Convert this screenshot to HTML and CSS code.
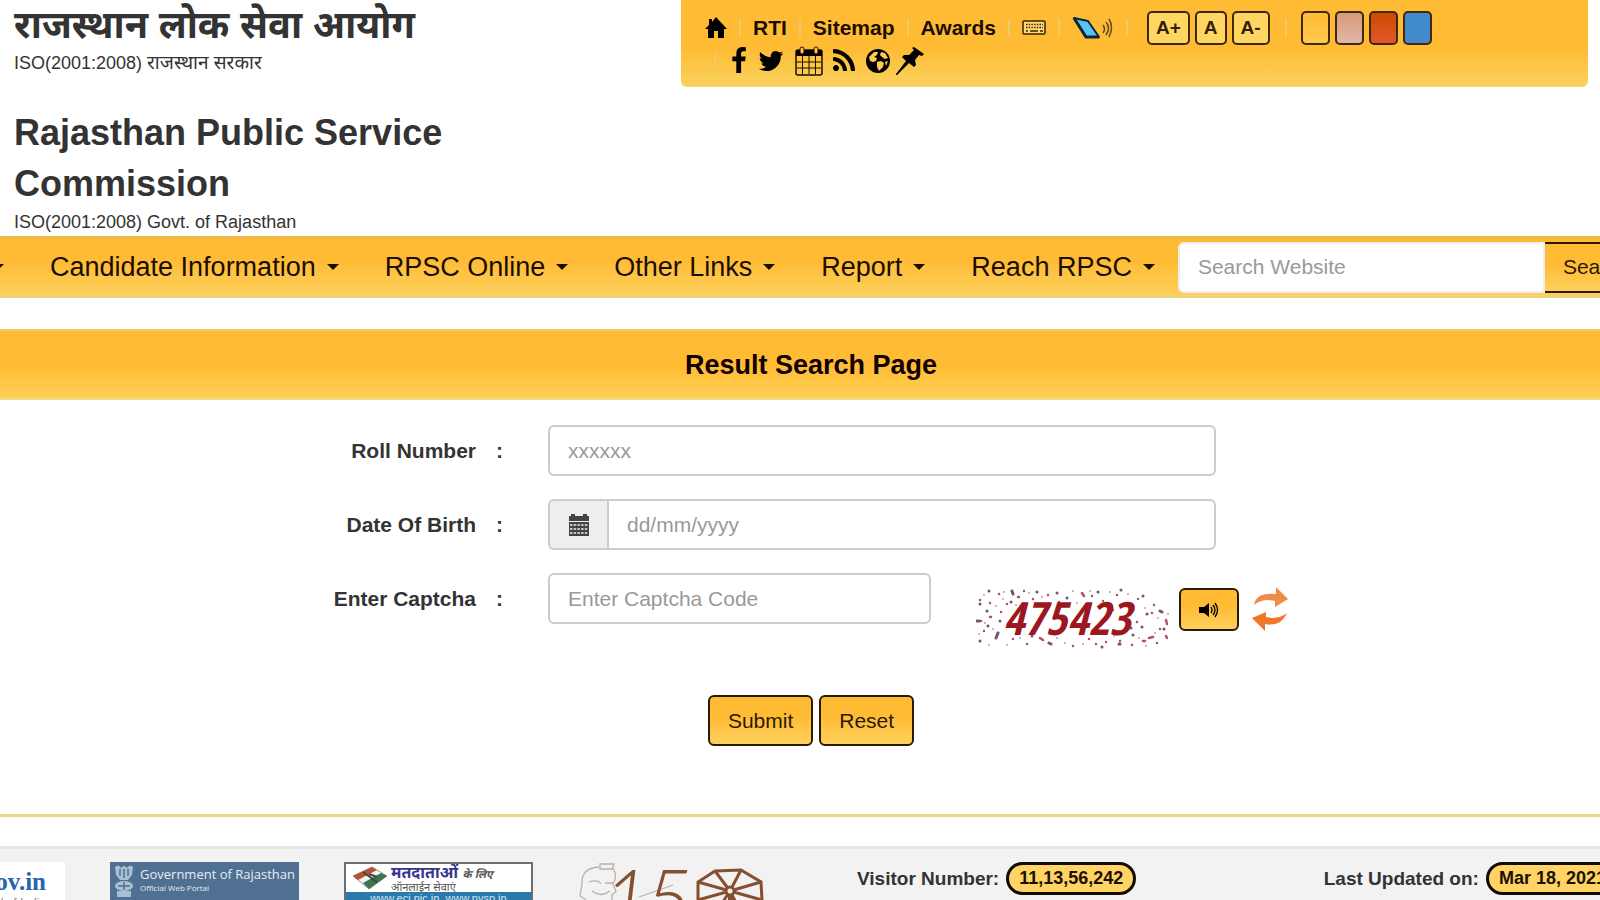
FILE: index.html
```html
<!DOCTYPE html>
<html lang="en">
<head>
<meta charset="utf-8">
<title>Result Search Page</title>
<link rel="stylesheet" href="styles.css">
</head>
<body>
<header class="header">
  <div class="brand">
    <p class="brand-title brand-hindi" lang="hi">राजस्थान लोक सेवा आयोग</p>
    <p class="brand-sub">ISO(2001:2008) <span class="sub-hindi" lang="hi">राजस्थान सरकार</span></p>
    <h1 class="brand-title brand-english">Rajasthan Public Service Commission</h1>
    <p class="brand-sub">ISO(2001:2008) Govt. of Rajasthan</p>
  </div>
  <div class="tools">
    <div class="tools-row">
      <a class="home" href="#" aria-label="Home"><svg width="22" height="22" viewBox="0 0 22 22"><path d="M11 0 22 12h-3v9h-6v-7H9v7H3v-9H0L4 8V2h3v3z"/></svg></a>
      <span class="sep"></span><a href="#">RTI</a>
      <span class="sep"></span><a href="#">Sitemap</a>
      <span class="sep"></span><a href="#">Awards</a>
      <span class="sep"></span>
      <a href="#" aria-label="Keyboard"><svg width="24" height="16" viewBox="0 0 24 16"><rect x="1" y="1" width="22" height="13" rx="1" fill="#ffd978" stroke="#3b2500" stroke-width="1.5"/><path d="M4 4.500h17M4 7.500h17" stroke="#3b2500" stroke-width="1.500" stroke-dasharray="1.500 1.200"/><path d="M4 11h2m2 0h8m2 0h3" stroke="#3b2500" stroke-width="1.500"/></svg></a>
      <span class="sep"></span>
      <a href="#" aria-label="Screen reader"><svg width="42" height="24" viewBox="0 0 42 24"><path d="M2 2 16 5l11 16H14z" fill="#58c4f2" stroke="#0b2836" stroke-width="2" stroke-linejoin="round"/><path d="M2 2 14 21h13" fill="none" stroke="#0b2836" stroke-width="3"/><path d="M31 9q3 4 0 8M34 6q5 6 0 13M37 3q5 8 0 18" fill="none" stroke="#5b4a23" stroke-width="1.500"/></svg></a>
      <span class="sep"></span>
      <div class="group sizes"><button class="size">A+</button><button class="size">A</button><button class="size">A-</button></div>
      <span class="sep"></span>
      <div class="group themes"><button class="theme" aria-label="Yellow theme"></button><button class="theme pink" aria-label="Pink theme"></button><button class="theme red" aria-label="Red theme"></button><button class="theme blue" aria-label="Blue theme"></button></div>
    </div>
    <div class="tools-row social">
      <span class="sep"></span>
      <a href="#" aria-label="Facebook"><svg width="20" height="28" viewBox="330 0 1280 1792"><path d="M1343 12v264h-157q-86 0-116 36t-30 108v189h293l-39 296h-254v759h-306v-759h-255v-296h255v-218q0-186 104-288.500t277-102.500q147 0 228 12z"/></svg></a>
      <a href="#" aria-label="Twitter"><svg width="28" height="28" viewBox="0 0 1792 1792"><path d="M1684 408q-67 98-162 167 1 14 1 42 0 130-38 259.500t-115.500 248.500-184.500 210.500-258 146-323 54.500q-271 0-496-145 35 4 78 4 225 0 401-138-105-2-188-64.500t-114-159.500q33 5 61 5 43 0 85-11-112-23-185.500-111.500t-73.500-205.500v-4q68 38 146 41-66-44-105-115t-39-154q0-88 44-163 121 149 294.500 238.500t371.500 99.500q-8-38-8-74 0-134 94.500-228.500t228.500-94.500q140 0 236 102 109-21 205-78-37 115-142 178 93-10 186-50z"/></svg></a>
      <a class="calendar" href="#" aria-label="Calendar"><svg width="28" height="30" viewBox="0 0 28 30"><rect x="1" y="4" width="26" height="25" rx="2" fill="none" stroke="#1c0d00" stroke-width="1.500"/><path d="M1 4h26v6H1z"/><path d="M7.500 10v18M14 10v18M20.500 10v18M2 16h24M2 22h24" stroke="#1c0d00"/><rect x="5" y="1" width="4" height="7" rx="2" fill="#ffc447" stroke="#1c0d00"/><rect x="19" y="1" width="4" height="7" rx="2" fill="#ffc447" stroke="#1c0d00"/></svg></a>
      <a href="#" aria-label="RSS feed"><svg width="28" height="28" viewBox="0 0 1792 1792"><path d="M576 1344q0 80-56 136t-136 56-136-56-56-136 56-136 136-56 136 56 56 136zm512 123q2 28-17 48-18 21-47 21h-135q-25 0-43-16.500t-20-41.500q-22-229-184.500-391.500t-391.500-184.500q-25-2-41.500-20t-16.500-43v-135q0-29 21-47 17-17 43-17h5q160 13 306 80.500t259 181.500q114 113 181.500 259t80.500 306zm512 2q2 27-18 47-18 20-46 20h-143q-26 0-44.500-17.500t-19.500-42.500q-12-215-101-408.500t-231.500-336-336-231.500-408.500-102q-25-1-42.500-19.500t-17.500-43.500v-143q0-28 20-46 18-18 44-18h3q262 13 501.500 120t425.500 294q187 186 294 425.500t120 501.500z"/></svg></a>
      <a href="#" aria-label="Language"><svg width="26" height="26" viewBox="0 0 26 26"><circle cx="13" cy="13" r="12"/><path d="M4 9l5-5 4 0-1 3-3 2 3 1-1 3-3 1-3-1zM16 4l4 1 3 5-3 1-3-2-2-2zM12 14l4-1 3 2-1 4-4 4-2-4zM20 14l3-1-2 5z" fill="#ffc957"/></svg></a>
      <a class="pin" href="#" aria-label="Pin"><svg width="30" height="30" viewBox="0 0 30 30"><path d="M19 1 29 8l-2 2-3-1-4 5 1 5-2 2-5-4L2 29l-1 0 0-1L11 15 7 11l2-2 5 0 5-5-2-2z"/></svg></a>
    </div>
  </div>
</header>

<nav class="nav">
  <a class="nav-first" href="#" aria-label="More"><span class="caret"></span></a>
  <a href="#">Candidate Information<span class="caret"></span></a>
  <a href="#">RPSC Online<span class="caret"></span></a>
  <a href="#">Other Links<span class="caret"></span></a>
  <a href="#">Report<span class="caret"></span></a>
  <a href="#">Reach RPSC<span class="caret"></span></a>
  <form class="search"><input class="field search-field" type="text" placeholder="Search Website" aria-label="Search Website"><button class="btn search-btn" type="button">Search</button></form>
</nav>

<main class="main">
  <h2 class="page-title">Result Search Page</h2>
  <form class="form">
    <div class="row">
      <label class="label" for="roll">Roll Number</label><span class="colon">:</span>
      <input class="field" id="roll" type="text" placeholder="xxxxxx">
    </div>
    <div class="row">
      <label class="label" for="dob">Date Of Birth</label><span class="colon">:</span>
      <div class="date"><span class="addon"><svg width="20" height="22" viewBox="0 0 20 22"><path d="M0 2h2V0h4v2h8V0h4v2h2v5H0zM0 8h20v14H0z" fill="#444"/><path d="M1 11h18M1 15h18M1 19h18" stroke="#eee" stroke-width="1.500" stroke-dasharray="2.500 1.200"/></svg></span><input class="field date-field" id="dob" type="text" placeholder="dd/mm/yyyy"></div>
    </div>
    <div class="row captcha-row">
      <label class="label" for="captcha">Enter Captcha</label><span class="colon">:</span>
      <input class="field" id="captcha" type="text" placeholder="Enter Captcha Code">
      <div class="captcha">
        <svg width="196" height="62" viewBox="0 0 196 62">
          <g fill="none" stroke-linecap="round">
            <path stroke="#b0506a" stroke-width="2.500" d="M4 13h0M14 30h1M23 7h0M31 17h0M42 10h1M48 4h0M57 12h0M72 8h0M83 15h0M106 6l2 3M116 9h0M127 14h0M141 8h0M150 16h0M162 12h0M178 18h0M190 33l1 4M184 42h0M173 51l4-1M167 54h2M190 49l1 2M156 58h0M130 55h0M113 52h0M97 59h0M64 51l3 2M51 57h0M37 52h0M22 46h0M8 44h0M5 34h0M161 35h0M176 26h0M181 56h0M144 54h0M137 23h0M149 30h0M25 25h0M14 16h0M120 57h0"/>
            <path stroke="#71566d" stroke-width="3" d="M13 4h0M36 4l1 3M61 5h0M81 6h0M122 5h0M145 3h0M167 9h0M184 24l2 1M171 27h0M166 40h0M155 41h0M157 48h0M143 57h1M126 60h0M73 56l2 1M56 49h0M20 51l2-5M4 54h0M1 34h2M12 39h0M24 34h0M11 24h0M4 17h0M35 15h0M69 18h0M91 11h0M132 29h0M47 24h0M188 42h0"/>
            <path stroke="#d197a5" stroke-width="2" d="M8 8h0M28 5h0M53 6h0M66 10h0M97 4h0M101 16h0M114 4h0M134 5h0M152 7h0M158 23h0M169 21h0M182 31h0M192 27h0M179 46h0M163 51h0M170 59h0M138 49h0M107 57h0M89 56h0M81 51h0M44 51h0M31 58h0M13 58h0M17 42h0M3 47h0M9 36h0M20 19h0M27 12h0M40 18h0"/>
          </g>
          <text class="captcha-code" x="27" y="48">475423</text>
        </svg>
        <button class="btn audio" type="button" aria-label="Play captcha"><svg width="22" height="16" viewBox="0 0 22 16"><path d="M1 5h5l5-4v14l-5-4H1z"/><path d="M13 5q2 3 0 6M15 3q4 5 0 10M17 1q5 7 0 14" fill="none" stroke="#000" stroke-width="1.300"/></svg></button>
        <a class="refresh" href="#" aria-label="Refresh captcha"><svg width="36" height="44" viewBox="0 0 36 44"><path d="M2 18Q4 5 24 7V0l12 12-13 8v-6Q11 11 2 18z" fill="#f28b43"/><path d="M35 26Q29 40 13 37v7L0 31l14-6v5q12 3 21-4z" fill="#f27628"/></svg></a>
      </div>
    </div>
    <div class="actions"><button class="btn" type="button">Submit</button><button class="btn" type="button">Reset</button></div>
  </form>
</main>

<footer class="footer">
  <a class="logo logo-india" href="#"><strong>gov.in</strong><small>portal of India</small></a>
  <a class="logo logo-raj" href="#">
    <svg width="24" height="40" viewBox="0 0 24 40"><g fill="#a9bfd2"><path d="M3 3q4-3 6 1 3-4 6 0 3-4 6-1l-1 8-4 5H8l-4-5z"/><ellipse cx="12" cy="22" rx="9" ry="5"/><path d="M5 27h14v6H5z"/></g><path d="M8 5v7m4-7v9m4-9v7M6 22h12M12 18v8" stroke="#507091" stroke-width="1.500"/></svg>
    <span class="raj-text">Government of Rajasthan<small>Official Web Portal</small></span>
  </a>
  <a class="logo logo-vote" href="#">
    <span class="vote-top"><svg width="38" height="24" viewBox="0 0 38 24"><path d="M2 10 21 1l15 9-18 13z" fill="#f4f4f4" stroke="#999"/><path d="M2 10 21 1l5 3L7 14z" fill="#b9522f"/><path d="m12 17 18-10 6 3-18 13z" fill="#3c754c"/><path d="m12 6 14 10M18 8l8 3" stroke="#444" stroke-width="2"/></svg>
    <span class="vote-text" lang="hi"><b>मतदाताओं <i>के लिए</i></b><span>ऑनलाईन सेवाएं</span></span></span>
    <span class="vote-url">www.eci.nic.in&nbsp; www.nvsp.in</span>
  </a>
  <a class="logo logo-gandhi" href="#" aria-label="150 years">
    <svg width="188" height="60" viewBox="0 0 188 60">
      <g fill="none" stroke="#bbb0a7" stroke-width="1.300"><path d="M21 2h14l-2 5H21zM20 5Q2 6 3 22l-2 12 5 3v18M34 6q5 8 0 16l3 7-4 4v22M10 20q9-3 12 2M26 21h9M13 29q9 7 18 0M60 35l34-12"/></g>
      <text class="gandhi-number" x="24" y="67">1</text><text class="gandhi-number" x="66" y="67">5</text>
      <g fill="none" stroke="#855031" stroke-width="3"><path d="m136 9 26-1 20 12 1 18-20 14h-27l-17-14V20z"/><path d="M151 29 136 9m15 20 11-21m-11 21 31-9m-31 9 32 9m-32-9 12 23m-12-23-15 23m15-23-32 9m32-9-32-9"/><circle cx="151" cy="29" r="4" fill="#f2f2f2"/></g><path d="M149 34h5v26h-5z" fill="#855031"/>
    </svg>
  </a>
  <p class="stat visitors">Visitor Number: <span class="pill">11,13,56,242</span></p>
  <p class="stat updated">Last Updated on: <span class="pill">Mar 18, 2021</span></p>
</footer>
</body>
</html>
```
FILE: styles.css
```css
* { box-sizing: border-box; }
body {
  margin: 0;
  height: 100vh;
  overflow: hidden;
  background: #fff;
  color: #333;
  font: 21px/30px "Liberation Sans", Arial, "Noto Sans Devanagari", sans-serif;
}
p, h1, h2 { margin: 0; }
a { color: inherit; text-decoration: none; }
button, input { font: inherit; }
svg { display: block; flex: none; }

.header {
  display: grid;
  grid-template-columns: 1fr 907px;
  padding: 0 12px 0 14px;
}
.brand { max-width: 480px; height: 236px; }
.brand-title { font-size: 36px; font-weight: bold; line-height: 51px; }
.brand-hindi { font-size: 38px; line-height: 50px; }
.brand-english { margin-top: 31px; }
.brand-sub { font-size: 18px; line-height: 26px; }
.sub-hindi { font-size: 19px; }

.tools {
  align-self: start;
  padding: 10px 24px 9px;
  border-radius: 0 0 6px 6px;
  border-bottom: 1px solid #f3d582;
  background: linear-gradient(#ffbb33 55%, #f9d25c);
  color: #1c0d00;
  font-weight: bold;
}
.tools-row { display: flex; align-items: center; height: 35px; }
.sep { width: 2px; height: 18px; margin: 0 12px; background: #f6c765; }
.group { display: flex; gap: 5px; }
.sizes { margin: 0 3px 0 7px; }
.themes { margin-left: 2px; }
.size, .theme {
  height: 34px;
  padding: 0 7px;
  border: 2px solid #40280c;
  border-radius: 5px;
  background: #ffd65f;
  color: #30200c;
  font-size: 19px;
  line-height: 28px;
}
.theme { width: 29px; background: linear-gradient(#ffbb33, #fdca4e); }
.pink { background: linear-gradient(#d99a78, #e0b6aa); }
.red { background: linear-gradient(#cc4b00, #e2572a); }
.blue { background: #428bca; }
.social { gap: 7px; height: 32px; }
.social .sep { margin: 0 7px 0 9px; }
.calendar { margin-left: 3px; }
.pin { margin-left: -3px; }

.nav {
  display: flex;
  align-items: center;
  height: 62px;
  border-top: 3px solid #eebb44;
  border-bottom: 3px solid #efd47a;
  background: linear-gradient(#ffbb33 35%, #fdd05c);
  color: #1c0d00;
  font-size: 27px;
  white-space: nowrap;
}
.nav > a { display: flex; align-items: center; gap: 11px; margin-right: 46px; }
.nav > .nav-first { margin-left: -8px; }
.caret { border: 6px solid transparent; border-top-color: #1c0d00; border-bottom: 0; }
.search { display: flex; flex: none; margin-left: -23px; font-size: 21px; }
.field {
  width: 100%;
  min-width: 0;
  height: 51px;
  padding: 0 18px;
  border: 2px solid #ccc;
  border-radius: 6px;
  background: #fff;
  color: #555;
}
.field::placeholder { color: #999; opacity: 1; }
.search-field { width: 367px; border-radius: 6px 0 0 6px; border-color: #eee; }
.btn {
  height: 51px;
  padding: 0 18px;
  border: 2px solid #2b1a00;
  border-radius: 6px;
  background: linear-gradient(#ffbb33 40%, #fdd05c);
  color: #2b1a00;
}
.search-btn { border-left: 0; border-radius: 0; }

.main { margin-top: 31px; border-bottom: 3px solid #eed580; }
.page-title {
  padding: 19px 0 18px 22px;
  border-top: 2px solid #f0c864;
  border-bottom: 2px solid #f4d887;
  background: linear-gradient(#ffbb33 50%, #ffd055);
  color: #100;
  font-size: 27px;
  text-align: center;
}
.form { display: grid; gap: 23px; padding: 25px 0 68px; }
.row {
  display: grid;
  grid-template-columns: 476px 72px minmax(0, 668px);
  grid-template-rows: 51px;
  align-items: center;
}
.captcha-row { grid-template-columns: 476px 72px minmax(0, 383px) 1fr; }
.label { text-align: right; font-weight: bold; }
.colon { padding-left: 20px; font-weight: bold; }
.date { display: flex; }
.addon {
  display: grid;
  place-items: center;
  flex: none;
  width: 59px;
  border: 2px solid #ccc;
  border-right: 0;
  border-radius: 6px 0 0 6px;
  background: #eee;
}
.date-field { border-radius: 0 6px 6px 0; }
.captcha { display: flex; align-items: flex-start; align-self: start; margin: 14px 0 0 45px; }
.captcha-code { fill: #9d1720; font: italic 46px "Open Sans Condensed", "Open Sans", sans-serif; font-stretch: condensed; }
.audio { display: grid; place-items: center; width: 60px; height: 43px; padding: 0; margin: 1px 13px 0 7px; }
.actions { display: flex; justify-content: center; gap: 6px; padding: 48px 0 0 22px; }

.footer {
  display: flex;
  align-items: flex-start;
  height: 80px;
  margin-top: 29px;
  padding-top: 13px;
  border-top: 3px solid #e4e4e4;
  background: #f2f2f2;
  white-space: nowrap;
}
.logo { flex: none; height: 60px; overflow: hidden; }
.logo-india {
  display: flex;
  flex-direction: column;
  align-items: flex-end;
  width: 65px;
  padding: 6px 19px 0 0;
  background: #fff;
  color: #2b64ad;
  font: bold 25px/28px "Liberation Serif", serif;
}
.logo-india small { color: #888; font: 12px/14px "Liberation Sans", sans-serif; }
.logo-raj { display: flex; gap: 4px; width: 189px; margin-left: 45px; padding: 2px 0 0 2px; background: #507091; color: #e4edf5; }
.raj-text { font: 13px/20px "Open Sans", sans-serif; }
.raj-text small { display: block; font-size: 8px; line-height: 8px; }
.logo-vote { width: 189px; margin-left: 45px; border: 2px solid #667078; background: #fff; color: #34368c; }
.vote-top { display: flex; gap: 2px; height: 28px; padding: 2px 0 0 5px; }
.vote-text b, .vote-text span { display: block; }
.vote-text b { font-size: 16px; line-height: 14px; }
.vote-text i { color: #555; font-size: 11px; }
.vote-text span { color: #555; font-size: 11px; line-height: 12px; }
.vote-url { display: block; height: 29px; background: #2b78aa; color: #d4e8f3; font-size: 11px; line-height: 12px; text-align: center; }
.logo-gandhi { margin-left: 46px; }
.gandhi-number { fill: #855031; font: italic 300 82px Lato, sans-serif; }
.stat { display: flex; align-items: center; gap: 7px; font-size: 19px; font-weight: bold; }
.visitors { margin-left: 90px; }
.updated { margin-left: auto; margin-right: -19px; }
.pill {
  padding: 0 10px;
  border: 3px solid #100c04;
  border-radius: 17px;
  background: #ffd364;
  color: #1c1000;
  font-size: 18px;
  line-height: 27px;
}
```
